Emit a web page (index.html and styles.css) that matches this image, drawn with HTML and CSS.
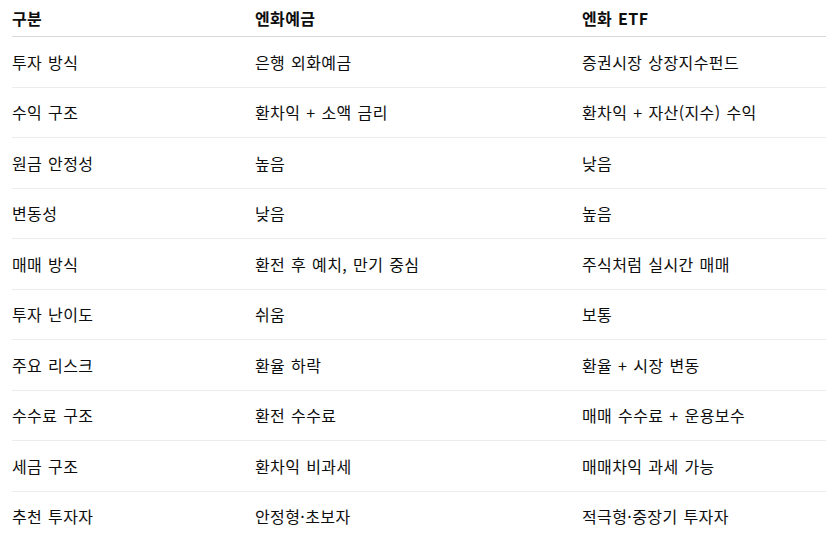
FILE: index.html
```html
<!DOCTYPE html>
<html lang="ko">
<head>
<meta charset="utf-8">
<link rel="stylesheet" href="styles.css">
</head>
<body>
<table class="cmp">
  <thead>
    <tr><th class="c1">구분</th><th class="c2">엔화예금</th><th class="c3">엔화 ETF</th></tr>
  </thead>
  <tbody>
    <tr><td>투자 방식</td><td>은행 외화예금</td><td>증권시장 상장지수펀드</td></tr>
    <tr><td>수익 구조</td><td>환차익 + 소액 금리</td><td>환차익 + 자산(지수) 수익</td></tr>
    <tr><td>원금 안정성</td><td>높음</td><td>낮음</td></tr>
    <tr><td>변동성</td><td>낮음</td><td>높음</td></tr>
    <tr><td>매매 방식</td><td>환전 후 예치, 만기 중심</td><td>주식처럼 실시간 매매</td></tr>
    <tr><td>투자 난이도</td><td>쉬움</td><td>보통</td></tr>
    <tr><td>주요 리스크</td><td>환율 하락</td><td>환율 + 시장 변동</td></tr>
    <tr><td>수수료 구조</td><td>환전 수수료</td><td>매매 수수료 + 운용보수</td></tr>
    <tr><td>세금 구조</td><td>환차익 비과세</td><td>매매차익 과세 가능</td></tr>
    <tr><td>추천 투자자</td><td>안정형·초보자</td><td>적극형·중장기 투자자</td></tr>
  </tbody>
</table>
</body>
</html>
```
FILE: styles.css
```css
html, body {
  margin: 0;
  padding: 0;
  background: #ffffff;
}
body {
  font-family: "Noto Sans CJK KR", "Noto Sans", sans-serif;
  font-size: 16px;
  letter-spacing: 0.4px;
  word-spacing: 1px;
  color: #0d0d0d;
}
.cmp {
  border-collapse: collapse;
  margin-left: 12px;
  width: 814px;
  table-layout: fixed;
}
.cmp th, .cmp td {
  text-align: left;
  vertical-align: middle;
  padding: 0;
  white-space: nowrap;
}
.cmp .c1 { width: 243px; }
.cmp .c2 { width: 327px; }
.cmp th {
  font-weight: 700;
  height: 36px;
  border-bottom: 1px solid #d9d9d9;
}
.cmp td {
  height: 49.5px;
  border-bottom: 1px solid #ececec;
}
.cmp tbody tr:last-child td {
  border-bottom: none;
}
```
